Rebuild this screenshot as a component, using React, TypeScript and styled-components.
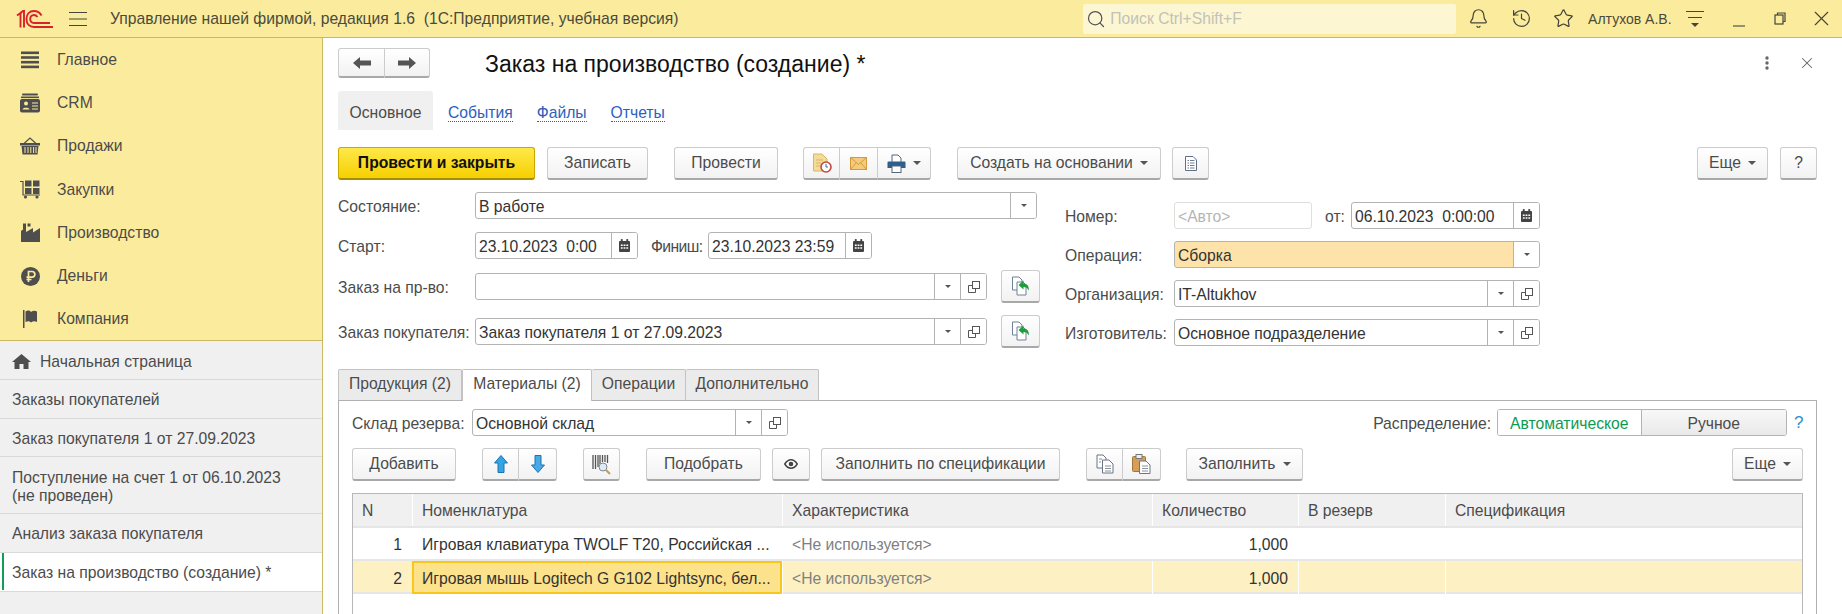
import React from 'react';
import styled, { createGlobalStyle } from 'styled-components';
import { Bell, History, Star, Search, X } from 'lucide-react';

const colors = {
  yellow: '#fbec9d',
  yellowBorder: '#c9b965',
  gray: '#f0f0f0',
  text: '#4b4b4b',
  dark: '#333333',
  field: '#b3b3b3',
  icon: '#4e4e4e'
};

const GlobalStyle = createGlobalStyle`
  html, body {
    margin: 0;
    padding: 0;
    background: #fff;
    font-family: "Liberation Sans", Arial, sans-serif;
    font-size: 15.7px;
    color: ${colors.text};
  }
  * { box-sizing: border-box; }
`;

const Page = styled.div`
  width: 1842px;
  height: 614px;
  overflow: hidden;
  display: flex;
  flex-direction: column;
`;

/* Top bar */
const TopBar = styled.header`
  display: flex;
  align-items: center;
  height: 38px;
  flex: none;
  background: ${colors.yellow};
  border-bottom: 1px solid ${colors.yellowBorder};
  color: #4a4a3c;
`;

const LogoBox = styled.div`
  display: flex;
  width: 69px;
  padding-left: 16px;
`;

const AppTitle = styled.div`
  margin-left: 23px;
  width: 974px;
  white-space: pre;
`;

const SearchBox = styled.div`
  display: flex;
  align-items: center;
  gap: 4px;
  width: 373px;
  height: 30px;
  padding-left: 3px;
  background: #fdf6d3;
  border-radius: 2px;
  color: #c2c2b6;
`;

const TopIcon = styled.div<{ $w: number }>`
  display: flex;
  justify-content: center;
  width: ${p => p.$w}px;
  flex: none;
  color: #45453a;
`;

const UserName = styled.div`
  width: 84px;
  margin-left: 3px;
  font-size: 14px;
  white-space: nowrap;
`;

/* Body */
const Body = styled.div`
  display: flex;
  flex: 1;
  min-height: 0;
`;

const Sidebar = styled.aside`
  width: 323px;
  flex: none;
  display: flex;
  flex-direction: column;
  background: ${colors.gray};
  border-right: 1px solid ${colors.yellowBorder};
`;

const SectionList = styled.nav`
  height: 303px;
  padding-bottom: 1px;
  background: ${colors.yellow};
  border-bottom: 1px solid ${colors.yellowBorder};
`;

const SectionItem = styled.div`
  display: flex;
  align-items: center;
  height: 43.2px;
  padding: 1px 0 0 20px;
  gap: 17px;
  color: ${colors.text};
`;

const OpenItem = styled.div<{ $active?: boolean; $h?: number }>`
  position: relative;
  display: flex;
  align-items: center;
  gap: 9px;
  height: ${p => p.$h ?? 38.5}px;
  padding: 3px 0 0 12px;
  line-height: 18px;
  background: ${p => (p.$active ? '#fff' : 'transparent')};
  border-bottom: 1px solid #d9d9d9;
  color: ${colors.text};

  ${p => p.$active && `
    &::before {
      content: '';
      position: absolute;
      left: 2px;
      top: 0;
      bottom: 1px;
      width: 2px;
      background: #0f9d58;
    }
  `}
`;

const Main = styled.main`
  flex: 1;
  min-width: 0;
  padding: 10px 0 0 15px;
  background: #fff;
`;

const HeaderRow = styled.div`
  display: flex;
  align-items: center;
  height: 30px;
  padding-right: 26px;
`;

const ButtonGroup = styled.div<{ $ml?: number }>`
  display: flex;
  flex: none;
  margin-left: ${p => p.$ml ?? 0}px;
`;

const Title = styled.h1`
  margin: 0 auto 0 55px;
  padding-top: 2px;
  font-size: 23px;
  font-weight: 400;
  color: #111;
  white-space: nowrap;
`;

const HeaderIcon = styled.div<{ $ml?: number }>`
  display: flex;
  margin-left: ${p => p.$ml ?? 0}px;
  color: #666;
`;

const PageTabs = styled.div`
  display: flex;
  align-items: center;
  height: 39px;
  margin-top: 13px;
`;

const PageTabActive = styled.div`
  display: flex;
  align-items: center;
  justify-content: center;
  width: 95px;
  height: 39px;
  padding-top: 5px;
  background: ${colors.gray};
  border-radius: 3px 3px 0 0;
`;

const PageLink = styled.a<{ $ml: number }>`
  margin: 5px 0 0 ${p => p.$ml}px;
  color: #2c60c0;
  border-bottom: 1px dotted #2c60c0;
  line-height: 16px;
`;

const CommandBar = styled.div<{ $mt?: number; $pr?: number }>`
  display: flex;
  align-items: stretch;
  height: 33px;
  margin-top: ${p => p.$mt ?? 0}px;
  padding-right: ${p => p.$pr ?? 0}px;
`;

const Btn = styled.div<{ $w: number; $h?: number; $ml?: number; $primary?: boolean; $seg?: 'first' | 'middle' | 'last'; $auto?: boolean }>`
  display: flex;
  align-items: center;
  justify-content: center;
  gap: 7px;
  flex: none;
  width: ${p => p.$w}px;
  height: ${p => p.$h ?? 33}px;
  margin-left: ${p => (p.$auto ? 'auto' : `${p.$ml ?? 0}px`)};
  white-space: nowrap;
  color: ${p => (p.$primary ? '#111' : colors.text)};
  font-weight: ${p => (p.$primary ? 700 : 400)};
  background: ${p => (p.$primary ? 'linear-gradient(#ffe84a, #f6d000)' : 'linear-gradient(#ffffff, #f2f2f2)')};
  border: 1px solid ${p => (p.$primary ? '#c9a800' : '#cccccc')};
  border-bottom: 2px solid ${p => (p.$primary ? '#a88d00' : '#a8a8a8')};
  border-radius: ${p =>
    p.$seg === 'first' ? '3px 0 0 3px' : p.$seg === 'last' ? '0 3px 3px 0' : p.$seg === 'middle' ? '0' : '3px'};
  ${p => (p.$seg === 'middle' || p.$seg === 'last') && 'border-left: 0;'}
`;

const Caret = styled.span<{ $small?: boolean }>`
  width: 0;
  height: 0;
  border-left: ${p => (p.$small ? 3 : 4)}px solid transparent;
  border-right: ${p => (p.$small ? 3 : 4)}px solid transparent;
  border-top: ${p => (p.$small ? 3.5 : 4)}px solid #555;
`;

/* Form */
const Form = styled.section`
  display: flex;
  margin-top: 12px;
`;

const LeftColumn = styled.div`
  width: 702px;
`;

const RightColumn = styled.div`
  width: 475px;
  margin-left: 25px;
  padding-top: 10px;
`;

const Row = styled.div<{ $mt?: number }>`
  display: flex;
  align-items: center;
  height: 27px;
  margin-top: ${p => p.$mt ?? 0}px;
`;

const Label = styled.div<{ $w?: number; $ml?: number; $auto?: boolean; $tight?: boolean }>`
  flex: none;
  width: ${p => (p.$w ? `${p.$w}px` : 'auto')};
  margin-left: ${p => (p.$auto ? 'auto' : `${p.$ml ?? 0}px`)};
  padding-top: 2px;
  white-space: nowrap;
  color: ${colors.text};
  ${p => p.$tight && 'letter-spacing: -0.6px;'}
`;

const Field = styled.div<{ $w: number; $bg?: string; $disabled?: boolean }>`
  display: flex;
  flex: none;
  width: ${p => p.$w}px;
  height: 27px;
  background: ${p => p.$bg ?? '#fff'};
  border: 1px solid ${p => (p.$disabled ? '#dedede' : colors.field)};
  border-radius: 3px;
  overflow: hidden;
`;

const FieldValue = styled.div<{ $muted?: boolean }>`
  flex: 1;
  min-width: 0;
  padding-left: 3px;
  line-height: 27px;
  white-space: pre;
  color: ${p => (p.$muted ? '#b5b5b5' : colors.dark)};
`;

const FieldButton = styled.div`
  display: flex;
  align-items: center;
  justify-content: center;
  flex: none;
  width: 26px;
  background: #fff;
  border-left: 1px solid ${colors.field};
`;

const SmallBtn = styled(Btn)`
  margin-top: -3px;
  margin-bottom: -3px;
`;

/* Tabs panel */
const TabStrip = styled.div`
  display: flex;
  height: 32px;
  margin-top: 23px;
  width: 1479px;
  border-bottom: 1px solid #b0b0b0;
`;

const Tab = styled.div<{ $w: number; $active?: boolean }>`
  display: flex;
  align-items: center;
  justify-content: center;
  flex: none;
  width: ${p => p.$w}px;
  height: ${p => (p.$active ? 32 : 31)}px;
  padding-bottom: ${p => (p.$active ? 3 : 2)}px;
  background: ${p => (p.$active ? '#fff' : '#ebebeb')};
  border: 1px solid #c2c2c2;
  border-bottom: 0;
  border-left-width: ${p => (p.$active ? 1 : 0)}px;
  border-radius: 2px 2px 0 0;
  &:first-child { border-left-width: 1px; }
  color: ${colors.text};
`;

const TabPanel = styled.div`
  width: 1479px;
  height: 215px;
  padding: 8px 13px 0 13px;
  border-left: 1px solid #b0b0b0;
  border-right: 1px solid #b0b0b0;
`;

const PanelTop = styled.div`
  display: flex;
  align-items: center;
  height: 27px;
`;

const Toggle = styled.div`
  display: flex;
  flex: none;
  width: 290px;
  height: 27px;
  margin-left: 6px;
  border: 1px solid #b3b3b3;
  border-radius: 3px;
  overflow: hidden;
`;

const ToggleOption = styled.div<{ $on?: boolean }>`
  display: flex;
  align-items: center;
  justify-content: center;
  width: ${p => (p.$on ? 143 : 146)}px;
  padding-top: 2px;
  color: ${p => (p.$on ? '#0c9a52' : colors.text)};
  background: ${p => (p.$on ? '#fff' : 'linear-gradient(#f8f8f8, #e9e9e9)')};
  ${p => !p.$on && 'border-left: 1px solid #b3b3b3;'}
`;

const HelpMark = styled.span`
  width: 16px;
  padding-left: 7px;
  color: #2c8fd0;
  font-size: 17px;
`;

/* Table */
const columns = '59px 370px 370px 146px 147px 1fr';

const TableBox = styled.div`
  margin-top: 12px;
  width: 1451px;
  height: 130px;
  border: 1px solid #b8b8b8;
  border-bottom: 0;
`;

const TableRow = styled.div<{ $header?: boolean; $selected?: boolean }>`
  display: grid;
  grid-template-columns: ${columns};
  height: ${p => (p.$header ? 34 : 33)}px;
  background: ${p => (p.$header ? colors.gray : p.$selected ? '#fdf0c3' : '#fff')};
  border-bottom: 2px solid #e6e6e6;
`;

const Cell = styled.div<{ $align?: 'right'; $muted?: boolean; $header?: boolean; $current?: boolean }>`
  display: flex;
  align-items: center;
  justify-content: ${p => (p.$align === 'right' ? 'flex-end' : 'flex-start')};
  padding: 2px ${p => (p.$align === 'right' ? 10 : 8)}px 0 ${p => (p.$current ? 8 : 9)}px;
  white-space: nowrap;
  overflow: hidden;
  color: ${p => (p.$muted ? '#808080' : p.$header ? colors.text : colors.dark)};
  border-left: ${p => (p.$current ? '0' : '1px solid #fff')};
  ${p => p.$current && 'background: #fde28c; border: 2px solid #f8c71c; height: 33px;'}
  &:first-child { border-left: 0; }
`;

/* Icons */
const Svg = styled.svg`
  display: block;
  flex: none;
`;

const Logo1C = () => (
  <Svg width="37" height="18" viewBox="0 0 37 18" fill="none" stroke="#d8232a">
    <path d="M1 5.5 L4.5 3 V17.5" strokeWidth="1.9" />
    <path d="M4.5 3 L7 1 H8 V17.5" strokeWidth="1.9" />
    <path d="M25.5 5.5 C23.5 2 20.5 1 18 1 C13.5 1 10.5 4 10.5 9 C10.5 14 13.5 17 18 17 H37" strokeWidth="1.9" />
    <path d="M21.5 7 C20.5 5.5 19.5 5 18 5 C15.5 5 14.2 6.8 14.2 9 C14.2 11.5 15.5 13 18 13 H34" strokeWidth="1.9" />
  </Svg>
);

const Hamburger = () => (
  <Svg width="18" height="16" viewBox="0 0 18 16" stroke="#45453a" strokeWidth="1.2">
    <path d="M0 1.5H18M0 8H18M0 14.5H18" />
  </Svg>
);

const LinesMenu = () => (
  <Svg width="20" height="20" viewBox="0 0 20 20" stroke="#45453a" strokeWidth="1.2" fill="#45453a">
    <path d="M1 2.5H19M3 8.5H17" fill="none" />
    <path d="M6 14H14L10 18Z" stroke="none" />
  </Svg>
);

const MinimizeBar = () => (
  <Svg width="12" height="22" viewBox="0 0 12 22" stroke="#6a6a5a" strokeWidth="1.4">
    <path d="M0 18H12" />
  </Svg>
);

const Restore = () => (
  <Svg width="12" height="13" viewBox="0 0 12 13" fill="none" stroke="#45453a" strokeWidth="1.2">
    <rect x="1" y="3" width="8" height="9" />
    <path d="M3.5 3V1H11V9.5H9" />
  </Svg>
);

const NavMenu = () => (
  <Svg width="18" height="18" viewBox="0 0 18 18" fill={colors.icon}>
    <rect y="0.5" width="18" height="2.6" /><rect y="5.2" width="18" height="2.6" />
    <rect y="9.9" width="18" height="2.6" /><rect y="14.6" width="18" height="2.6" />
  </Svg>
);

const NavCrm = () => (
  <Svg width="20" height="20" viewBox="0 0 20 20" fill={colors.icon}>
    <rect x="2" y="0.5" width="16" height="2" rx="1" />
    <rect x="1" y="3.5" width="18" height="1.6" />
    <rect y="6" width="20" height="13.5" rx="2" />
    <circle cx="6" cy="10.5" r="2" fill={colors.yellow} />
    <path d="M2.5 16.5C2.5 14 9.5 14 9.5 16.5Z" fill={colors.yellow} />
    <path d="M12 10H18M12 13H18M12 16H18" stroke={colors.yellow} strokeWidth="1.2" />
  </Svg>
);

const NavBasket = () => (
  <Svg width="20" height="18" viewBox="0 0 20 18" fill={colors.icon}>
    <path d="M4 6.5 L10 1 L16 6.5" fill="none" stroke={colors.icon} strokeWidth="1.2" />
    <rect y="6" width="20" height="2.5" />
    <path d="M1.5 9H18.5L17.5 17.5H2.5Z" />
    <path d="M5 10V16M8 10V16M10.8 10V16M13.6 10V16M16 10V16" stroke={colors.yellow} strokeWidth="1" />
  </Svg>
);

const NavCart = () => (
  <Svg width="21" height="19" viewBox="0 0 21 19" fill={colors.icon}>
    <path d="M0 1.5H3V15H20" fill="none" stroke={colors.icon} strokeWidth="1.2" />
    <rect x="5" y="0.5" width="6.5" height="6" /><rect x="13" y="0.5" width="6.5" height="6" />
    <rect x="5" y="8" width="6.5" height="6" /><rect x="13" y="8" width="6.5" height="6" />
    <circle cx="5.5" cy="17" r="1.6" /><circle cx="17" cy="17" r="1.6" />
  </Svg>
);

const NavFactory = () => (
  <Svg width="19" height="19" viewBox="0 0 19 19" fill={colors.icon}>
    <path d="M0 19V8L5 4V9L12 5V9.5L19 5V19Z" />
    <rect x="2" y="0.5" width="3" height="5.5" /><rect x="6.5" y="0.5" width="3" height="3" />
  </Svg>
);

const NavMoney = () => (
  <Svg width="19" height="19" viewBox="0 0 19 19">
    <circle cx="9.5" cy="9.5" r="9.5" fill={colors.icon} />
    <path d="M7.5 15V4.5H11A2.8 2.8 0 0 1 11 10.2H5.5M5.5 12.5H10.5" fill="none" stroke={colors.yellow} strokeWidth="1.7" />
  </Svg>
);

const NavFlag = () => (
  <Svg width="18" height="18" viewBox="0 0 18 18" fill={colors.icon}>
    <rect x="2" y="0" width="1.5" height="18" />
    <path d="M4.5 1.5C7 0 9 0.5 10 2C12 0.5 14 0.5 16 1.5V12C14 11 12 11 10 12.5C8.5 11 7 11 4.5 12Z" />
  </Svg>
);

const Home = () => (
  <Svg width="19" height="15" viewBox="0 0 19 15" fill={colors.icon}>
    <path d="M9.5 0L19 8H16.5V15H11.5V10H7.5V15H2.5V8H0Z" />
  </Svg>
);

const ArrowLeft = () => (
  <Svg width="18" height="12" viewBox="0 0 18 12" fill="#555">
    <path d="M0 6L7 0V3.5H18V8.5H7V12Z" />
  </Svg>
);

const ArrowRight = () => (
  <Svg width="18" height="12" viewBox="0 0 18 12" fill="#555">
    <path d="M18 6L11 0V3.5H0V8.5H11V12Z" />
  </Svg>
);

const Dots = () => (
  <Svg width="4" height="14" viewBox="0 0 4 14" fill="#666">
    <circle cx="2" cy="2" r="1.7" /><circle cx="2" cy="7" r="1.7" /><circle cx="2" cy="12" r="1.7" />
  </Svg>
);

const DocClock = () => (
  <Svg width="20" height="20" viewBox="0 0 20 20">
    <path d="M1.5 1H10L15 6V18H1.5Z" fill="#f3dc9a" stroke="#d9b662" />
    <path d="M4 7H11M4 10H9M4 13H8" stroke="#d9b662" />
    <circle cx="14" cy="14" r="5" fill="#fff" stroke="#c5483d" strokeWidth="1.6" />
    <path d="M14 11V14H16" stroke="#3a6ea5" fill="none" />
  </Svg>
);

const Mail = () => (
  <Svg width="17" height="13" viewBox="0 0 17 13">
    <rect x="0.5" y="0.5" width="16" height="12" fill="#f4cb7d" stroke="#d59a3a" />
    <path d="M0.5 0.5L8.5 7.5L16.5 0.5M0.5 12.5L6 6M16.5 12.5L11 6" fill="none" stroke="#d59a3a" />
  </Svg>
);

const Printer = () => (
  <Svg width="19" height="19" viewBox="0 0 19 19">
    <path d="M5 1H11L14 4V9H5Z" fill="#fff" stroke="#567" />
    <path d="M1.5 7.5H17.5A1 1 0 0 1 18.5 8.5V14H0.5V8.5A1 1 0 0 1 1.5 7.5Z" fill="#2d5f8e" />
    <rect x="5" y="12" width="9" height="6.5" fill="#fff" stroke="#567" />
  </Svg>
);

const DocList = () => (
  <Svg width="12" height="15" viewBox="0 0 12 15" fill="none" stroke="#5f6f85">
    <path d="M0.5 0.5H8L11.5 4V14.5H0.5Z" fill="#fff" />
    <path d="M2.5 4.5H4M5 4.5H9.5M2.5 7H4M5 7H9.5M2.5 9.5H4M5 9.5H9.5M2.5 12H4M5 12H9.5" strokeWidth="0.9" />
  </Svg>
);

const Calendar = () => (
  <Svg width="11" height="13" viewBox="0 0 12 14" fill="#444">
    <rect x="2" y="0" width="2" height="3" /><rect x="8" y="0" width="2" height="3" />
    <path d="M1 2H11A1 1 0 0 1 12 3V13A1 1 0 0 1 11 14H1A1 1 0 0 1 0 13V3A1 1 0 0 1 1 2Z" />
    <path d="M2 6H4V7.5H2ZM5 6H7V7.5H5ZM8 6H10V7.5H8ZM2 9H4V10.5H2ZM5 9H7V10.5H5ZM8 9H10V10.5H8Z" fill="#fff" />
  </Svg>
);

const OpenIcon = () => (
  <Svg width="12" height="12" viewBox="0 0 12 12" fill="none" stroke="#555">
    <rect x="4.5" y="0.5" width="7" height="7" />
    <path d="M4.5 4.5H0.5V11.5H7.5V7.5" />
  </Svg>
);

const BackDoc = () => (
  <Svg width="20" height="20" viewBox="0 0 20 20">
    <path d="M1.5 1H8L11 4V14H1.5Z" fill="#fff" stroke="#6f8196" />
    <path d="M6 6H12L15 9V19H6Z" fill="#fff" stroke="#6f8196" />
    <path d="M7.5 9L12.5 4.5V7.5C16 7.5 18 10 18 14.5C16.5 12 15 11 12.5 11V13.5Z" fill="#1f9d3a" />
  </Svg>
);

const ArrowUp = () => (
  <Svg width="14" height="18" viewBox="0 0 14 18">
    <path d="M7 0.5L13.5 8H10V17.5H4V8H0.5Z" fill="#35a4e6" stroke="#1a74ad" />
  </Svg>
);

const ArrowDown = () => (
  <Svg width="14" height="18" viewBox="0 0 14 18">
    <path d="M7 17.5L13.5 10H10V0.5H4V10H0.5Z" fill="#4aa8e8" stroke="#1a74ad" />
  </Svg>
);

const Barcode = () => (
  <Svg width="20" height="21" viewBox="0 0 20 21">
    <path d="M1 1V15M3.5 1V15M6 1V13M8 1V10M10.5 1V8M13 1V8M15.5 1V9" stroke="#555" strokeWidth="1.3" />
    <circle cx="11" cy="13" r="4" fill="#dfeaf5" stroke="#7b8a99" />
    <path d="M14 16L18 20" stroke="#c99a4a" strokeWidth="2" />
  </Svg>
);

const Eye = () => (
  <Svg width="14" height="10" viewBox="0 0 14 10">
    <path d="M0.8 5C3 1.5 5 0.8 7 0.8C9 0.8 11 1.5 13.2 5C11 8.5 9 9.2 7 9.2C5 9.2 3 8.5 0.8 5Z" fill="#fff" stroke="#444" strokeWidth="1.5" />
    <circle cx="7" cy="5" r="2.3" fill="#444" />
  </Svg>
);

const CopyDocs = () => (
  <Svg width="18" height="20" viewBox="0 0 18 20" fill="#fff" stroke="#6b7583">
    <path d="M1 1H7L10 4V14H1Z" />
    <path d="M6.5 6H13L17 10V19H6.5Z" />
    <path d="M9 12H15M9 14.5H15M9 17H15M3 5H6M3 8H5" fill="none" strokeWidth="0.8" />
  </Svg>
);

const PasteDocs = () => (
  <Svg width="19" height="20" viewBox="0 0 19 20">
    <rect x="0.5" y="2.5" width="13" height="15" rx="1" fill="#d69f59" stroke="#a2763d" />
    <rect x="4" y="0.5" width="6" height="4" fill="#eee" stroke="#777" />
    <path d="M7.5 7H14L18 11V19.5H7.5Z" fill="#fff" stroke="#6b7583" />
    <path d="M10 12H16M10 14.5H16M10 17H16" stroke="#6b7583" strokeWidth="0.8" />
  </Svg>
);

const sections = [
  { title: 'Главное', icon: <NavMenu /> },
  { title: 'CRM', icon: <NavCrm /> },
  { title: 'Продажи', icon: <NavBasket /> },
  { title: 'Закупки', icon: <NavCart /> },
  { title: 'Производство', icon: <NavFactory /> },
  { title: 'Деньги', icon: <NavMoney /> },
  { title: 'Компания', icon: <NavFlag /> }
];

const SectionIcon = styled.span`
  display: flex;
  justify-content: center;
  width: 20px;
  flex: none;
`;

const Lookup = ({ w, value }: { w: number; value?: string }) => (
  <Field $w={w}>
    <FieldValue>{value}</FieldValue>
    <FieldButton><Caret $small /></FieldButton>
    <FieldButton><OpenIcon /></FieldButton>
  </Field>
);

const Picker = ({ w, value }: { w: number; value: string }) => (
  <Field $w={w}>
    <FieldValue>{value}</FieldValue>
    <FieldButton><Calendar /></FieldButton>
  </Field>
);

const headers = ['N', 'Номенклатура', 'Характеристика', 'Количество', 'В резерв', 'Спецификация'];

export default function App() {
  return (
    <Page>
      <GlobalStyle />
      <TopBar>
        <LogoBox><Logo1C /></LogoBox>
        <Hamburger />
        <AppTitle>Управление нашей фирмой, редакция 1.6  (1С:Предприятие, учебная версия)</AppTitle>
        <SearchBox>
          <Search size={20} strokeWidth={1.5} color="#555" />
          Поиск Ctrl+Shift+F
        </SearchBox>
        <TopIcon $w={45}><Bell size={21} strokeWidth={1.4} /></TopIcon>
        <TopIcon $w={41}><History size={21} strokeWidth={1.4} /></TopIcon>
        <TopIcon $w={43}><Star size={21} strokeWidth={1.4} /></TopIcon>
        <UserName>Алтухов А.В.</UserName>
        <TopIcon $w={46}><LinesMenu /></TopIcon>
        <TopIcon $w={41}><MinimizeBar /></TopIcon>
        <TopIcon $w={41}><Restore /></TopIcon>
        <TopIcon $w={42}><X size={25} strokeWidth={1.1} /></TopIcon>
      </TopBar>
      <Body>
        <Sidebar>
          <SectionList>
            {sections.map(s => (
              <SectionItem key={s.title}>
                <SectionIcon>{s.icon}</SectionIcon>
                {s.title}
              </SectionItem>
            ))}
          </SectionList>
          <OpenItem $h={39}><Home />Начальная страница</OpenItem>
          <OpenItem>Заказы покупателей</OpenItem>
          <OpenItem>Заказ покупателя 1 от 27.09.2023</OpenItem>
          <OpenItem $h={57}>
            <span>Поступление на счет 1 от 06.10.2023<br />(не проведен)</span>
          </OpenItem>
          <OpenItem>Анализ заказа покупателя</OpenItem>
          <OpenItem $active $h={39}>Заказ на производство (создание) *</OpenItem>
        </Sidebar>
        <Main>
          <HeaderRow>
            <ButtonGroup>
              <Btn $w={47} $h={30} $seg="first"><ArrowLeft /></Btn>
              <Btn $w={45} $h={30} $seg="last"><ArrowRight /></Btn>
            </ButtonGroup>
            <Title>Заказ на производство (создание) *</Title>
            <HeaderIcon><Dots /></HeaderIcon>
            <HeaderIcon $ml={29}><X size={18} strokeWidth={1.4} /></HeaderIcon>
          </HeaderRow>

          <PageTabs>
            <PageTabActive>Основное</PageTabActive>
            <PageLink $ml={15}>События</PageLink>
            <PageLink $ml={24}>Файлы</PageLink>
            <PageLink $ml={24}>Отчеты</PageLink>
          </PageTabs>

          <CommandBar $mt={17} $pr={25}>
            <Btn $w={197} $primary>Провести и закрыть</Btn>
            <Btn $w={101} $ml={12}>Записать</Btn>
            <Btn $w={104} $ml={26}>Провести</Btn>
            <ButtonGroup $ml={25}>
              <Btn $w={37} $seg="first"><DocClock /></Btn>
              <Btn $w={38} $seg="middle"><Mail /></Btn>
              <Btn $w={53} $seg="last"><Printer /><Caret /></Btn>
            </ButtonGroup>
            <Btn $w={204} $ml={26}>Создать на основании<Caret /></Btn>
            <Btn $w={37} $ml={11}><DocList /></Btn>
            <Btn $w={71} $auto>Еще<Caret /></Btn>
            <Btn $w={37} $ml={12}>?</Btn>
          </CommandBar>

          <Form>
            <LeftColumn>
              <Row>
                <Label $w={137}>Состояние:</Label>
                <Field $w={562}>
                  <FieldValue>В работе</FieldValue>
                  <FieldButton><Caret $small /></FieldButton>
                </Field>
              </Row>
              <Row $mt={13}>
                <Label $w={137}>Старт:</Label>
                <Picker w={163} value="23.10.2023  0:00" />
                <Label $w={57} $ml={13} $tight>Финиш:</Label>
                <Picker w={164} value="23.10.2023 23:59" />
              </Row>
              <Row $mt={14}>
                <Label $w={137}>Заказ на пр-во:</Label>
                <Lookup w={512} />
                <SmallBtn $w={39} $ml={14}><BackDoc /></SmallBtn>
              </Row>
              <Row $mt={18}>
                <Label $w={137}>Заказ покупателя:</Label>
                <Lookup w={512} value="Заказ покупателя 1 от 27.09.2023" />
                <SmallBtn $w={39} $ml={14}><BackDoc /></SmallBtn>
              </Row>
            </LeftColumn>
            <RightColumn>
              <Row>
                <Label $w={109}>Номер:</Label>
                <Field $w={138} $disabled><FieldValue $muted>{'<Авто>'}</FieldValue></Field>
                <Label $w={26} $ml={13}>от:</Label>
                <Picker w={189} value="06.10.2023  0:00:00" />
              </Row>
              <Row $mt={12}>
                <Label $w={109}>Операция:</Label>
                <Field $w={366} $bg="#fde3a9">
                  <FieldValue>Сборка</FieldValue>
                  <FieldButton><Caret $small /></FieldButton>
                </Field>
              </Row>
              <Row $mt={12}>
                <Label $w={109}>Организация:</Label>
                <Lookup w={366} value="IT-Altukhov" />
              </Row>
              <Row $mt={12}>
                <Label $w={109}>Изготовитель:</Label>
                <Lookup w={366} value="Основное подразделение" />
              </Row>
            </RightColumn>
          </Form>

          <TabStrip>
            <Tab $w={124}>Продукция (2)</Tab>
            <Tab $w={130} $active>Материалы (2)</Tab>
            <Tab $w={94}>Операции</Tab>
            <Tab $w={133}>Дополнительно</Tab>
          </TabStrip>
          <TabPanel>
            <PanelTop>
              <Label $w={120}>Склад резерва:</Label>
              <Lookup w={316} value="Основной склад" />
              <Label $auto>Распределение:</Label>
              <Toggle>
                <ToggleOption $on>Автоматическое</ToggleOption>
                <ToggleOption>Ручное</ToggleOption>
              </Toggle>
              <HelpMark>?</HelpMark>
            </PanelTop>
            <CommandBar $mt={12}>
              <Btn $w={104}>Добавить</Btn>
              <ButtonGroup $ml={26}>
                <Btn $w={37} $seg="first"><ArrowUp /></Btn>
                <Btn $w={38} $seg="last"><ArrowDown /></Btn>
              </ButtonGroup>
              <Btn $w={37} $ml={26}><Barcode /></Btn>
              <Btn $w={115} $ml={26}>Подобрать</Btn>
              <Btn $w={38} $ml={11}><Eye /></Btn>
              <Btn $w={239} $ml={11}>Заполнить по спецификации</Btn>
              <ButtonGroup $ml={26}>
                <Btn $w={37} $seg="first"><CopyDocs /></Btn>
                <Btn $w={38} $seg="last"><PasteDocs /></Btn>
              </ButtonGroup>
              <Btn $w={117} $ml={25}>Заполнить<Caret /></Btn>
              <Btn $w={71} $auto>Еще<Caret /></Btn>
            </CommandBar>
            <TableBox>
              <TableRow $header>
                {headers.map(h => <Cell key={h} $header>{h}</Cell>)}
              </TableRow>
              <TableRow>
                <Cell $align="right">1</Cell>
                <Cell>Игровая клавиатура TWOLF T20, Российская ...</Cell>
                <Cell $muted>{'<Не используется>'}</Cell>
                <Cell $align="right">1,000</Cell>
                <Cell />
                <Cell />
              </TableRow>
              <TableRow $selected>
                <Cell $align="right">2</Cell>
                <Cell $current>Игровая мышь Logitech G G102 Lightsync, бел...</Cell>
                <Cell $muted>{'<Не используется>'}</Cell>
                <Cell $align="right">1,000</Cell>
                <Cell />
                <Cell />
              </TableRow>
            </TableBox>
          </TabPanel>
        </Main>
      </Body>
    </Page>
  );
}
